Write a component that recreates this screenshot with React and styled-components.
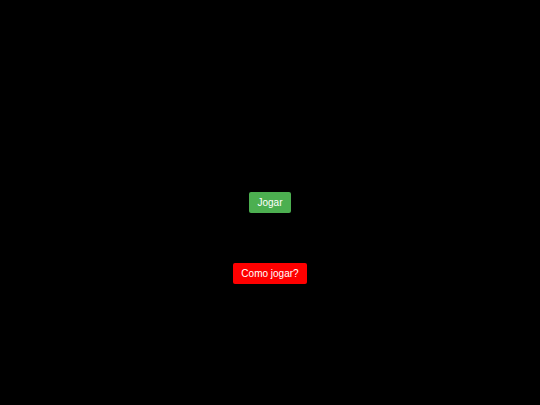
import React from "react";
import styled, { createGlobalStyle } from "styled-components";

const GlobalStyle = createGlobalStyle`
  body {
    margin: 0;
    background-color: #000;
    font-family: "Liberation Sans", Arial, sans-serif;
  }
`;

/* The play button sits in the middle row, so it stays at the center of the screen */
const MenuContainer = styled.main`
  min-height: 100vh;
  display: grid;
  grid-template-rows: 1fr auto 1fr;
  row-gap: 50px;
  justify-items: center;
  align-items: start;
`;

const MenuButton = styled.button`
  grid-row: ${({ $row }) => $row};
  padding: 5px 8px;
  font-family: inherit;
  font-size: 10px;
  line-height: 11px;
  color: white;
  background-color: ${({ $color }) => $color};
  border: none;
  border-radius: 2px;
  cursor: pointer;

  &:hover {
    opacity: 0.9;
  }
`;

function App() {
  return (
    <>
      <GlobalStyle />
      <MenuContainer>
        <MenuButton type="button" $row={2} $color="#4caf50">
          Jogar
        </MenuButton>
        <MenuButton type="button" $row={3} $color="#ff0000">
          Como jogar?
        </MenuButton>
      </MenuContainer>
    </>
  );
}

export default App;
